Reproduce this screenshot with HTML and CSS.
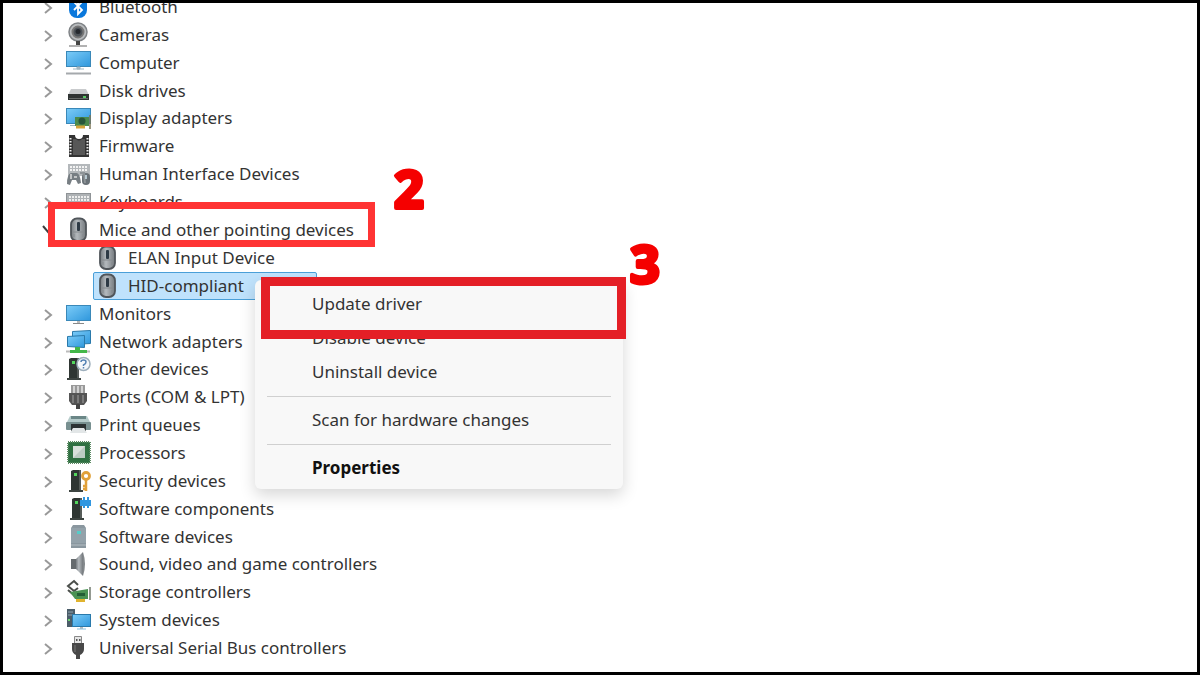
FILE: index.html
```html
<!DOCTYPE html>
<html lang="en">
<head>
    <meta charset="UTF-8">
    <meta name="viewport" content="width=device-width, initial-scale=1.0">
    <title>Device Manager - Update driver</title>
    <link rel="stylesheet" href="styles.css">
</head>
<body>

<!-- shared shapes -->
<svg class="defs" aria-hidden="true">
    <defs>
        <linearGradient id="blue" x1="0" y1="0" x2="1" y2="1">
            <stop offset="0" stop-color="#7cccf8"/>
            <stop offset="1" stop-color="#2f97dc"/>
        </linearGradient>
        <linearGradient id="gray" x1="0" y1="0" x2="1" y2="0">
            <stop offset="0" stop-color="#777c80"/>
            <stop offset="0.4" stop-color="#b4b9bd"/>
            <stop offset="1" stop-color="#74797d"/>
        </linearGradient>
        <symbol id="chevron" viewBox="0 0 16 16">
            <path d="M4 4l6 5-6 5" fill="none" stroke="#999" stroke-width="2"/>
        </symbol>
        <symbol id="mouse" viewBox="0 0 25 26">
            <rect x="5" y="1.500" width="15" height="22.500" rx="6" fill="url(#gray)" stroke="#50555a" stroke-width="1.800"/>
            <path d="M7 15h11M8 17v3M17 17v3" stroke="#858a8e" stroke-width="1"/>
            <rect x="11" y="5" width="3" height="9" rx="1" fill="#2e3a45"/>
        </symbol>
        <symbol id="tower" viewBox="0 0 25 26">
            <path d="M5 3l2-1h8v20H5z" fill="#2f3633"/>
            <path d="M13 2h2v20h-2z" fill="#555b58"/>
            <path d="M3 22h14v2H3z" fill="#3d4441"/>
            <rect x="8" y="5" width="3" height="3" fill="#52d65c"/>
        </symbol>
    </defs>
</svg>

<main class="frame">
    <ul class="tree">
        <li class="row">
            <button class="toggle" aria-label="Expand Bluetooth"><svg><use href="#chevron"/></svg></button>
            <svg class="icon" viewBox="0 0 25 26"><rect x="3" y="0" width="18" height="24" rx="8" fill="#0a78dc"/><path d="M8 8l8 8-4 4V4l4 4-8 8" fill="none" stroke="#fff" stroke-width="1.800"/></svg>
            <span>Bluetooth</span>
        </li>
        <li class="row">
            <button class="toggle" aria-label="Expand Cameras"><svg><use href="#chevron"/></svg></button>
            <svg class="icon" viewBox="0 0 25 26"><circle cx="12" cy="10" r="9" fill="#b9bcbe" stroke="#808487" stroke-width="1.500"/><circle cx="12" cy="10" r="5.500" fill="#4d5359" stroke="#777" stroke-width="2"/><circle cx="12" cy="9.500" r="2.500" fill="#24282e"/><path d="M10 19h4v4h-4z" fill="#444"/><path d="M3 24h18" stroke="#999" stroke-width="1.500"/></svg>
            <span>Cameras</span>
        </li>
        <li class="row">
            <button class="toggle" aria-label="Expand Computer"><svg><use href="#chevron"/></svg></button>
            <svg class="icon" viewBox="0 0 25 26"><rect x="0.500" y="1.500" width="24" height="15" fill="url(#blue)" stroke="#3a88b8"/><path d="M11 17h3v2h-3zM7 19h11" fill="#bbb" stroke="#9db5c2"/><path d="M0 23.500h25" stroke="#a5a9ac" stroke-width="2"/></svg>
            <span>Computer</span>
        </li>
        <li class="row">
            <button class="toggle" aria-label="Expand Disk drives"><svg><use href="#chevron"/></svg></button>
            <svg class="icon" viewBox="0 0 25 26"><path d="M5 11h15l3 6H2z" fill="#c9cbcd"/><rect x="2" y="16" width="21" height="6" fill="#303433"/><path d="M3 20.500h19" stroke="#656967"/><rect x="17" y="18" width="3" height="2" fill="#58c763"/></svg>
            <span>Disk drives</span>
        </li>
        <li class="row">
            <button class="toggle" aria-label="Expand Display adapters"><svg><use href="#chevron"/></svg></button>
            <svg class="icon" viewBox="0 0 25 26"><rect x="0.500" y="3.500" width="24" height="15" fill="url(#blue)" stroke="#3a88b8"/><path d="M4 20.500h7" stroke="#9db5c2"/><rect x="9" y="12" width="14" height="9" fill="#4b8a4c"/><circle cx="16" cy="16" r="3.500" fill="#28563a"/><path d="M10 22h9" stroke="#d6a43a" stroke-width="3"/><path d="M24 10v14" stroke="#7b7455" stroke-width="1.500"/></svg>
            <span>Display adapters</span>
        </li>
        <li class="row">
            <button class="toggle" aria-label="Expand Firmware"><svg><use href="#chevron"/></svg></button>
            <svg class="icon" viewBox="0 0 25 26"><path d="M3 2h6q0 4 4 4t4-4h6v22H3z" fill="#333"/><path d="M7 6h3q3 3 6 0h3v16H7z" fill="#575757"/><path d="M4.500 5v18M21.500 5v18" stroke="#eee" stroke-width="2" stroke-dasharray="1.500 1.500"/></svg>
            <span>Firmware</span>
        </li>
        <li class="row">
            <button class="toggle" aria-label="Expand Human Interface Devices"><svg><use href="#chevron"/></svg></button>
            <svg class="icon" viewBox="0 0 25 26"><rect x="2" y="3" width="22" height="12" fill="#b4b8bb"/><path d="M4 6h18M4 9h18" stroke="#f3f3f3" stroke-width="2" stroke-dasharray="2 1"/><path d="M1 23q0-10 4-11h6q3 1 4 10l-3 1-2-4H6l-2 5z" fill="#777e83"/><path d="M5 13v5M8 16h3" stroke="#ddd" stroke-width="1.500"/><rect x="16" y="12" width="8" height="12" rx="4" fill="#697177"/><path d="M14 12h4l1 10" fill="none" stroke="#8d9397" stroke-width="2"/><path d="M20 14v4" stroke="#cfe3ed" stroke-width="1.500"/></svg>
            <span>Human Interface Devices</span>
        </li>
        <li class="row">
            <button class="toggle" aria-label="Expand Keyboards"><svg><use href="#chevron"/></svg></button>
            <svg class="icon" viewBox="0 0 25 26"><rect x="0.500" y="4.500" width="24" height="15" fill="#aeb2b5" stroke="#8f9396"/><path d="M3 8h20M3 11h20M3 14h20" stroke="#eee" stroke-width="2" stroke-dasharray="2 1"/><path d="M7 17.500h11" stroke="#eee" stroke-width="2"/></svg>
            <span>Keyboards</span>
        </li>
        <li class="row">
            <button class="toggle open" aria-label="Collapse Mice and other pointing devices"><svg><use href="#chevron"/></svg></button>
            <svg class="icon"><use href="#mouse"/></svg>
            <span>Mice and other pointing devices</span>
            <div class="mark mark-mice"></div>
            <svg class="step step-two"><text x="8" y="50">2</text></svg>
        </li>
        <li class="row child">
            <span class="device"><svg class="icon"><use href="#mouse"/></svg>ELAN Input Device</span>
        </li>
        <li class="row child">
            <span class="device selected"><svg class="icon"><use href="#mouse"/></svg>HID-compliant</span>
            <div class="menu" role="menu">
                <button role="menuitem">Update driver</button>
                <button role="menuitem">Disable device</button>
                <button role="menuitem">Uninstall device</button>
                <hr>
                <button role="menuitem">Scan for hardware changes</button>
                <hr>
                <button role="menuitem" class="default">Properties</button>
            </div>
            <div class="mark mark-update"></div>
            <svg class="step step-three"><text x="8" y="50">3</text></svg>
        </li>
        <li class="row">
            <button class="toggle" aria-label="Expand Monitors"><svg><use href="#chevron"/></svg></button>
            <svg class="icon" viewBox="0 0 25 26"><rect x="0.500" y="4.500" width="24" height="15" fill="url(#blue)" stroke="#3a88b8"/><path d="M11 20h3v2h-3z" fill="#bbb"/><path d="M7 22.500h11" stroke="#888"/></svg>
            <span>Monitors</span>
        </li>
        <li class="row">
            <button class="toggle" aria-label="Expand Network adapters"><svg><use href="#chevron"/></svg></button>
            <svg class="icon" viewBox="0 0 25 26"><path d="M6.500 2.500l18-1v13l-18 1z" fill="url(#blue)" stroke="#2a79aa"/><path d="M1.500 7.500l17-1v12l-17-1z" fill="url(#blue)" stroke="#2a79aa"/><path d="M9 18h5v3h7v3H4v-3h5z" fill="#43b749"/><path d="M0 22.500h4M21 22.500h3" stroke="#bbb" stroke-width="2"/></svg>
            <span>Network adapters</span>
        </li>
        <li class="row">
            <button class="toggle" aria-label="Expand Other devices"><svg><use href="#chevron"/></svg></button>
            <svg class="icon" viewBox="0 0 25 26"><use href="#tower" x="-2" width="25" height="26"/><circle cx="17.500" cy="8" r="6.500" fill="#f4f7fa" stroke="#9eafbc" stroke-width="1.500"/><path d="M15 6q0-2 2.500-2t2.500 2-2.500 3v1M17.500 11v1.500" fill="none" stroke="#5482b3" stroke-width="1.500"/></svg>
            <span>Other devices</span>
        </li>
        <li class="row">
            <button class="toggle" aria-label="Expand Ports (COM &amp; LPT)"><svg><use href="#chevron"/></svg></button>
            <svg class="icon" viewBox="0 0 25 26"><path d="M5 1h14v9H5z" fill="#999"/><path d="M8 2v7M12 2v7M16 2v7" stroke="#e4e4e4" stroke-width="1.500"/><path d="M3 9h18v8l-3 4H6l-3-4z" fill="#555"/><path d="M7 11v8M12 11v8M17 11v8" stroke="#888" stroke-width="1.500"/><path d="M10 20h4v5h-4z" fill="#444"/></svg>
            <span>Ports (COM &amp; LPT)</span>
        </li>
        <li class="row">
            <button class="toggle" aria-label="Expand Print queues"><svg><use href="#chevron"/></svg></button>
            <svg class="icon" viewBox="0 0 25 26"><path d="M4 4h17l3 6H1z" fill="#b5cbca"/><path d="M5 4h15v3H5z" fill="#6b8787"/><rect x="0" y="10" width="25" height="8" rx="1" fill="#789090"/><path d="M5 12h15v7H5z" fill="#2c3233"/><path d="M7 16h11l3 5H4z" fill="#e2e6e7"/></svg>
            <span>Print queues</span>
        </li>
        <li class="row">
            <button class="toggle" aria-label="Expand Processors"><svg><use href="#chevron"/></svg></button>
            <svg class="icon" viewBox="0 0 25 26"><rect x="2" y="2" width="22" height="21" fill="#2f7042" stroke="#5b8a63" stroke-width="2" stroke-dasharray="1 1"/><rect x="3" y="3" width="20" height="19" fill="#2f7042"/><rect x="7" y="6" width="12" height="12" fill="#d8e0db"/><path d="M19 6v12H7z" fill="#bccbc3"/></svg>
            <span>Processors</span>
        </li>
        <li class="row">
            <button class="toggle" aria-label="Expand Security devices"><svg><use href="#chevron"/></svg></button>
            <svg class="icon" viewBox="0 0 25 26"><use href="#tower" width="25" height="26"/><circle cx="20" cy="8" r="3.500" fill="none" stroke="#e1a13a" stroke-width="2.800"/><path d="M20 11v12M20 18h-3M20 21h-3" stroke="#e1a13a" stroke-width="2.500"/></svg>
            <span>Security devices</span>
        </li>
        <li class="row">
            <button class="toggle" aria-label="Expand Software components"><svg><use href="#chevron"/></svg></button>
            <svg class="icon" viewBox="0 0 25 26"><use href="#tower" x="1" width="25" height="26"/><path d="M14 4h3V1h2v3h2V1h2v3h2v6h-2v2h-2v-2h-2v2h-2v-2h-3z" fill="#3197e0"/></svg>
            <span>Software components</span>
        </li>
        <li class="row">
            <button class="toggle" aria-label="Expand Software devices"><svg><use href="#chevron"/></svg></button>
            <svg class="icon" viewBox="0 0 25 26"><path d="M7 1h11l2 3v20H5V4z" fill="#8a979f"/><path d="M5 4h15v15H5z" fill="#94a2aa"/><rect x="11" y="7" width="4" height="3" fill="#55cdc9"/><path d="M5 21h15" stroke="#b3bdc2"/></svg>
            <span>Software devices</span>
        </li>
        <li class="row">
            <button class="toggle" aria-label="Expand Sound, video and game controllers"><svg><use href="#chevron"/></svg></button>
            <svg class="icon" viewBox="0 0 25 26"><path d="M5 8h5v10H5z" fill="#666b6e"/><path d="M10 8l7-7v24l-7-7z" fill="url(#gray)"/><path d="M17 1q4 12 0 24z" fill="#83888b"/></svg>
            <span>Sound, video and game controllers</span>
        </li>
        <li class="row">
            <button class="toggle" aria-label="Expand Storage controllers"><svg><use href="#chevron"/></svg></button>
            <svg class="icon" viewBox="0 0 25 26"><path d="M12 6L8 2 2 7l6 5 4-3M2 11l7 6" fill="none" stroke="#4a4e4a" stroke-width="2"/><path d="M4 13l18-3v10H9z" fill="#4a9253"/><path d="M11 14h8v3h-8z" fill="#235e35"/><path d="M24 8v13" stroke="#71796e" stroke-width="1.500"/><path d="M10 21.500h9" stroke="#e0b32e" stroke-width="3"/></svg>
            <span>Storage controllers</span>
        </li>
        <li class="row">
            <button class="toggle" aria-label="Expand System devices"><svg><use href="#chevron"/></svg></button>
            <svg class="icon" viewBox="0 0 25 26"><path d="M1 2h8v18H1z" fill="#4b5d69"/><path d="M2 5h5M2 8h5" stroke="#91a4af"/><rect x="2" y="12" width="2" height="2" fill="#6bd36f"/><rect x="6.500" y="7.500" width="18" height="12" fill="url(#blue)" stroke="#2a79aa"/><path d="M14 20h3v2h-3z" fill="#bbb"/><path d="M11 22h9" stroke="#8ac1df"/></svg>
            <span>System devices</span>
        </li>
        <li class="row">
            <button class="toggle" aria-label="Expand Universal Serial Bus controllers"><svg><use href="#chevron"/></svg></button>
            <svg class="icon" viewBox="0 0 25 26"><path d="M8.500 1.500h7v7h-7z" fill="#e6e6e6" stroke="#888"/><path d="M10 4h1.500v2H10zM13 4h1.500v2H13z" fill="#555"/><path d="M6 8h12v6q0 4-4 6v4h-4v-4q-4-2-4-6z" fill="#484848"/><path d="M9 10v7" stroke="#777"/></svg>
            <span>Universal Serial Bus controllers</span>
        </li>
    </ul>
</main>

</body>
</html>
```
FILE: styles.css
```css
* {
    box-sizing: border-box;
}

body {
    margin: 0;
    font-family: "Noto Sans", "Open Sans", sans-serif;
    font-size: 17px;
    color: #333;
}

button {
    padding: 0;
    border: none;
    background: none;
    font: inherit;
    color: inherit;
    cursor: pointer;
}

.defs {
    position: absolute;
    width: 0;
    height: 0;
}

.frame {
    height: 100vh;
    border: 3px solid #000;
    background-color: #fff;
    overflow: hidden;
}

/* the list is scrolled a little, so the first row is cut */
.tree {
    display: grid;
    grid-auto-rows: 1fr;
    height: 100%;
    margin: -10px 0 0;
    padding: 0;
    list-style: none;
}

.row {
    position: relative;
    display: flex;
    align-items: center;
    gap: 8px;
    padding-left: 38px;
    line-height: 24px;
    white-space: nowrap;
}

.toggle {
    display: flex;
    width: 17px;
    height: 16px;
}

.toggle svg {
    width: 16px;
    height: 16px;
}

.toggle.open svg {
    transform: rotate(90deg);
    filter: brightness(0.4);
}

.icon {
    flex: none;
    width: 25px;
    height: 26px;
}

.child {
    padding-left: 90px;
}

.device {
    display: flex;
    align-items: center;
    gap: 8px;
    width: 224px;
    height: 28px;
    padding: 0 1px;
    border: 1px solid transparent;
}

.selected {
    border-color: #4a9fd8;
    border-radius: 2px;
    background-color: #bfe2fc;
}

.menu {
    position: absolute;
    top: 8px;
    left: 252px;
    z-index: 1;
    display: flex;
    flex-direction: column;
    width: 368px;
    padding: 7px 12px 4px;
    border-radius: 6px;
    background-color: #f8f8f8;
    box-shadow: 0 6px 16px rgba(0, 0, 0, 0.16);
}

.menu button {
    height: 34px;
    padding-left: 45px;
    text-align: left;
}

.menu hr {
    width: 100%;
    margin: 7px 0 6px;
    border: none;
    border-top: 1px solid #d0d0d0;
}

.menu .default {
    font-weight: 700;
    color: #111;
}

/* tutorial marks over the window */
.mark {
    position: absolute;
    z-index: 2;
    pointer-events: none;
}

.mark-mice {
    top: -14px;
    left: 45px;
    width: 327px;
    height: 45px;
    border: 7px solid #ff3434;
}

.mark-update {
    top: 5px;
    left: 258px;
    width: 365px;
    height: 62px;
    border: 9px solid #e41f26;
}

.step {
    position: absolute;
    z-index: 3;
    width: 48px;
    height: 72px;
    overflow: visible;
    font-size: 52px;
    font-weight: 700;
    fill: #f50000;
    stroke: #f50000;
    stroke-width: 4px;
    stroke-linejoin: round;
}

.step-two {
    top: -58px;
    left: 383px;
}

.step-three {
    top: -39px;
    left: 619px;
}
```
